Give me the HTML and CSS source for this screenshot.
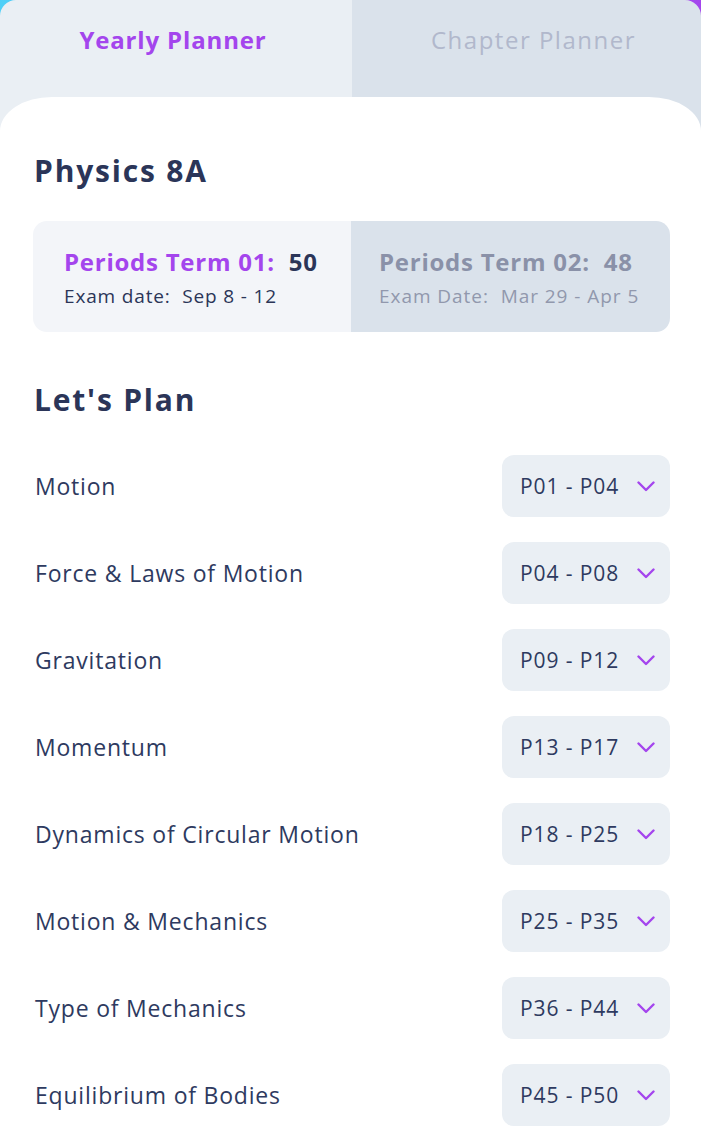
FILE: index.html
```html
<!DOCTYPE html>
<html>
<head>
<meta charset="utf-8">
<link rel="stylesheet" href="styles.css">
</head>
<body>
<div class="app">
  <div class="tabs">
    <div class="tab tab-active">Yearly Planner</div>
    <div class="tab tab-idle">Chapter Planner</div>
  </div>
  <div class="card">
    <h1 class="title">Physics 8A</h1>
    <div class="terms">
      <div class="term term-active">
        <div class="term-head"><span class="term-label">Periods Term 01:</span><span class="term-num">50</span></div>
        <div class="term-date">Exam date:&nbsp; Sep 8 - 12</div>
      </div>
      <div class="term term-idle">
        <div class="term-head"><span class="term-label">Periods Term 02:</span><span class="term-num">48</span></div>
        <div class="term-date">Exam Date:&nbsp; Mar 29 - Apr 5</div>
      </div>
    </div>
    <h2 class="title plan-title">Let's Plan</h2>
    <div class="rows">
      <div class="row"><span class="row-label">Motion</span><div class="pill"><span>P01 - P04</span><svg class="chev" viewBox="0 0 18 11"><polyline points="1.5,1.5 9,9 16.5,1.5"/></svg></div></div>
      <div class="row"><span class="row-label">Force &amp; Laws of Motion</span><div class="pill"><span>P04 - P08</span><svg class="chev" viewBox="0 0 18 11"><polyline points="1.5,1.5 9,9 16.5,1.5"/></svg></div></div>
      <div class="row"><span class="row-label">Gravitation</span><div class="pill"><span>P09 - P12</span><svg class="chev" viewBox="0 0 18 11"><polyline points="1.5,1.5 9,9 16.5,1.5"/></svg></div></div>
      <div class="row"><span class="row-label">Momentum</span><div class="pill"><span>P13 - P17</span><svg class="chev" viewBox="0 0 18 11"><polyline points="1.5,1.5 9,9 16.5,1.5"/></svg></div></div>
      <div class="row"><span class="row-label">Dynamics of Circular Motion</span><div class="pill"><span>P18 - P25</span><svg class="chev" viewBox="0 0 18 11"><polyline points="1.5,1.5 9,9 16.5,1.5"/></svg></div></div>
      <div class="row"><span class="row-label">Motion &amp; Mechanics</span><div class="pill"><span>P25 - P35</span><svg class="chev" viewBox="0 0 18 11"><polyline points="1.5,1.5 9,9 16.5,1.5"/></svg></div></div>
      <div class="row"><span class="row-label">Type of Mechanics</span><div class="pill"><span>P36 - P44</span><svg class="chev" viewBox="0 0 18 11"><polyline points="1.5,1.5 9,9 16.5,1.5"/></svg></div></div>
      <div class="row"><span class="row-label">Equilibrium of Bodies</span><div class="pill"><span>P45 - P50</span><svg class="chev" viewBox="0 0 18 11"><polyline points="1.5,1.5 9,9 16.5,1.5"/></svg></div></div>
    </div>
  </div>
</div>
</body>
</html>
```

FILE: styles.css
```css
html, body {
  margin: 0;
  padding: 0;
}
body {
  width: 701px;
  height: 1145px;
  overflow: hidden;
  background: linear-gradient(90deg, #4fd0f7 0%, #7f8cf5 50%, #a445ed 100%);
  font-family: "Open Sans", "Noto Sans", sans-serif;
  color: #2b3558;
}
.app {
  height: 1145px;
  border-radius: 16px 16px 0 0;
  overflow: hidden;
  background: linear-gradient(90deg, #eaeff4 0, #eaeff4 352px, #dae2eb 352px, #dae2eb 100%);
}
.tabs {
  display: grid;
  grid-template-columns: 352px 1fr;
  height: 97px;
}
.tab {
  padding-top: 25px;
  text-align: center;
  font-size: 24px;
  line-height: 30px;
  box-sizing: border-box;
  white-space: nowrap;
}
.tab-active {
  color: #a445ed;
  font-weight: 700;
  letter-spacing: 0.85px;
  padding-right: 6px;
}
.tab-idle {
  color: #b1b8cc;
  font-weight: 400;
  letter-spacing: 1.5px;
  padding-left: 14px;
}
.card {
  background: #fff;
  border-radius: 52px 52px 0 0 / 34px 34px 0 0;
  height: 1048px;
  padding: 56px 31px 0 34px;
  box-sizing: border-box;
}
.title {
  margin: 0;
  font-size: 30px;
  line-height: 36px;
  font-weight: 700;
  letter-spacing: 1.8px;
  color: #2b3558;
}
.terms {
  margin-top: 32px;
  display: grid;
  grid-template-columns: 318px 1fr;
  height: 111px;
  border-radius: 14px;
  overflow: hidden;
  margin-left: -1px;
}
.term {
  padding-top: 26px;
  box-sizing: border-box;
}
.term-active {
  background: #f3f5f9;
  padding-left: 31px;
}
.term-idle {
  background: #dae2eb;
  padding-left: 28px;
}
.term-head {
  font-size: 24px;
  line-height: 30px;
  font-weight: 700;
  letter-spacing: 0.75px;
  display: flex;
  gap: 14px;
  white-space: nowrap;
}
.term-active .term-label { color: #a445ed; }
.term-active .term-num { color: #2b3558; }
.term-idle .term-head { color: #8a91a8; }
.term-date {
  margin-top: 7px;
  font-size: 19px;
  line-height: 24px;
  letter-spacing: 0.85px;
  white-space: nowrap;
}
.term-active .term-date { color: #2b3558; }
.term-idle .term-date { color: #9198ad; letter-spacing: 0.95px; }
.plan-title {
  margin-top: 50px;
}
.rows {
  margin-top: 37px;
  display: flex;
  flex-direction: column;
  gap: 25px;
}
.row {
  display: flex;
  align-items: center;
  justify-content: space-between;
  height: 62px;
}
.row-label {
  font-size: 23px;
  letter-spacing: 0.8px;
  color: #2e3a60;
  padding-left: 1px;
}
.pill {
  width: 168px;
  height: 62px;
  box-sizing: border-box;
  border-radius: 12px;
  background: #eaeff4;
  display: flex;
  align-items: center;
  justify-content: space-between;
  padding: 0 15px 0 18px;
  font-size: 21px;
  letter-spacing: 0.9px;
  color: #2e3a60;
  white-space: nowrap;
}
.chev {
  width: 18px;
  height: 11px;
  fill: none;
  stroke: #a445ed;
  stroke-width: 2.4;
  stroke-linecap: round;
  stroke-linejoin: round;
}
```
